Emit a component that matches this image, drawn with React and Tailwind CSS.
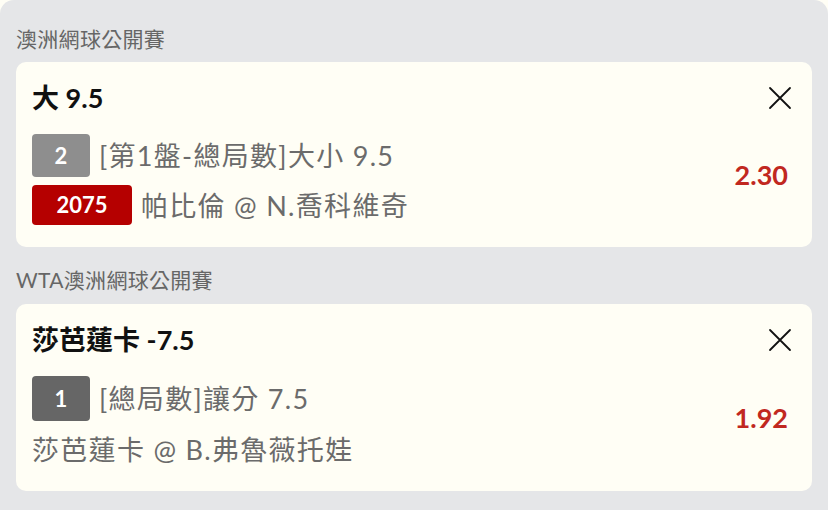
import React from "react";

const FONT = { fontFamily: 'Lato, "Noto Sans CJK TC", "Noto Sans", sans-serif' };

function CloseIcon() {
  return (
    <svg width="24" height="24" viewBox="0 0 24 24" className="shrink-0">
      <path d="M2 2 L22 22 M22 2 L2 22" stroke="#111" strokeWidth="1.8" strokeLinecap="round" fill="none" />
    </svg>
  );
}

function Badge({ children, className }) {
  return (
    <span className={`inline-flex items-center justify-center rounded-[4px] text-white font-bold text-[22px] leading-none ${className}`}>
      {children}
    </span>
  );
}

function Card({ title, odds, rows }) {
  return (
    <div className="bg-[#fffef5] rounded-[10px] pl-[16px] pr-[24px] pt-[18px] pb-[22px]">
      <div className="flex items-center justify-between">
        <div className="text-[27px] leading-[36px] font-bold text-[#111]">{title}</div>
        <div className="mr-[-4px]">
          <CloseIcon />
        </div>
      </div>
      <div className="flex items-center justify-between mt-[18px]">
        <div className="flex flex-col gap-[8px]">{rows}</div>
        <div className="text-[27px] font-bold text-[#c1281f] leading-none mb-[11px]">{odds}</div>
      </div>
    </div>
  );
}

const rowText = "text-[27px] tracking-[1.3px] text-[#6b6b6b] leading-none";

export default function App() {
  return (
    <div style={FONT} className="w-[828px] h-[510px] overflow-hidden bg-[#fffef5]">
      <div className="h-full bg-[#e5e6e8] rounded-t-[14px] px-[16px] pt-[27px]">
        <div className="text-[21px] leading-[24px] tracking-[0.3px] text-[#666]">澳洲網球公開賽</div>
        <div className="mt-[11px]">
          <Card
            title="大 9.5"
            odds="2.30"
            rows={[
              <div key="a" className="flex items-center h-[43px]">
                <Badge className="w-[58px] h-[43px] bg-[#8e8e8e]">2</Badge>
                <span className={`ml-[9px] ${rowText}`}>[第1盤-總局數]大小 9.5</span>
              </div>,
              <div key="b" className="flex items-center h-[40px]">
                <Badge className="w-[100px] h-[40px] bg-[#b50000]">2075</Badge>
                <span className={`ml-[9px] ${rowText}`}>帕比倫 @ N.喬科維奇</span>
              </div>,
            ]}
          />
        </div>
        <div className="mt-[21px] text-[21px] leading-[24px] tracking-[0.3px] text-[#666]">WTA澳洲網球公開賽</div>
        <div className="mt-[12px]">
          <Card
            title="莎芭蓮卡 -7.5"
            odds="1.92"
            rows={[
              <div key="a" className="flex items-center h-[45px]">
                <Badge className="w-[58px] h-[45px] bg-[#666666]">1</Badge>
                <span className={`ml-[9px] ${rowText}`}>[總局數]讓分 7.5</span>
              </div>,
              <div key="b" className="flex items-center h-[40px]">
                <span className={rowText}>莎芭蓮卡 @ B.弗魯薇托娃</span>
              </div>,
            ]}
          />
        </div>
      </div>
    </div>
  );
}
